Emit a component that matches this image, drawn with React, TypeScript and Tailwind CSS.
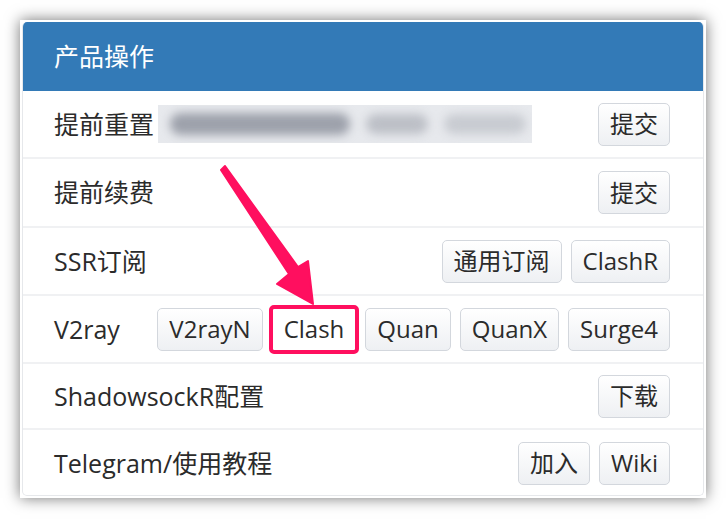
import React from 'react';

const FONT = { fontFamily: '"Open Sans", "Noto Sans CJK SC", sans-serif' };

function Btn({ children, hot }: { children: React.ReactNode; hot?: boolean }) {
    return (
        <span
            className={
                'flex items-center h-[43px] px-[11px] border border-[#d3d7dd] text-[24px] text-[#2b2b2b] leading-none ' +
                (hot
                    ? 'rounded-[2px] outline-[4px] outline-solid outline-[#ff0f5f] -outline-offset-1 bg-white'
                    : 'rounded-[5px] bg-gradient-to-b from-white to-[#eef0f3]')
            }
        >
            {children}
        </span>
    );
}

function Row({ h, label, children, first }: { h: string; label: React.ReactNode; children: React.ReactNode; first?: boolean }) {
    return (
        <div className={`flex items-center justify-between pl-[31px] pr-[33px] ${h} ${first ? '' : 'border-t-2 border-[#f0f1f3]'}`}>
            <div className="flex items-center text-[25px] text-[#2b2b2b] leading-none">{label}</div>
            <div className="flex items-center gap-[9px]">{children}</div>
        </div>
    );
}

export default function App() {
    return (
        <div className="relative w-[726px] h-[519px] bg-white pt-[20px] pl-[20px]" style={FONT}>
            <div className="w-[686px] h-[478px] bg-white p-[2px] shadow-[0_0_14px_rgba(0,0,0,0.55)]">
                <div className="h-full rounded-[5px] border border-[#e6e8eb] border-t-0 overflow-hidden">
                    <div className="h-[69px] bg-[#337ab7] flex items-center pl-[31px] text-white text-[25px] leading-none">产品操作</div>

                    <Row h="h-[66px]" first label={
                        <>
                            提前重置
                            <div className="ml-[4px] w-[374px] h-[38px] bg-[#e7e9ed] overflow-hidden">
                                <div className="flex items-center h-full gap-[16px] pl-[12px] blur-[5px]">
                                    <div className="w-[180px] h-[22px] rounded-full bg-[#9da1ab]" />
                                    <div className="w-[62px] h-[20px] rounded-full bg-[#bcbfc6]" />
                                    <div className="w-[82px] h-[20px] rounded-full bg-[#c8cbd1]" />
                                </div>
                            </div>
                        </>
                    }>
                        <Btn>提交</Btn>
                    </Row>

                    <Row h="h-[69px]" label="提前续费">
                        <Btn>提交</Btn>
                    </Row>

                    <Row h="h-[68px]" label="SSR订阅">
                        <Btn>通用订阅</Btn>
                        <Btn>ClashR</Btn>
                    </Row>

                    <Row h="h-[68px]" label="V2ray">
                        <Btn>V2rayN</Btn>
                        <Btn hot>Clash</Btn>
                        <Btn>Quan</Btn>
                        <Btn>QuanX</Btn>
                        <Btn>Surge4</Btn>
                    </Row>

                    <Row h="h-[66px]" label="ShadowsockR配置">
                        <Btn>下载</Btn>
                    </Row>

                    <Row h="h-[68px]" label="Telegram/使用教程">
                        <Btn>加入</Btn>
                        <Btn>Wiki</Btn>
                    </Row>
                </div>
            </div>

            {/* arrow drawn over the panel */}
            <svg className="absolute left-0 top-0 pointer-events-none" width="726" height="519" viewBox="0 0 726 519">
                <polygon
                    points="221,170 225,166 298,267 308,261 313,304 277,284 289,274"
                    fill="#ff0f5f"
                    stroke="#ff0f5f"
                    strokeWidth="2"
                    strokeLinejoin="round"
                />
            </svg>
        </div>
    );
}
